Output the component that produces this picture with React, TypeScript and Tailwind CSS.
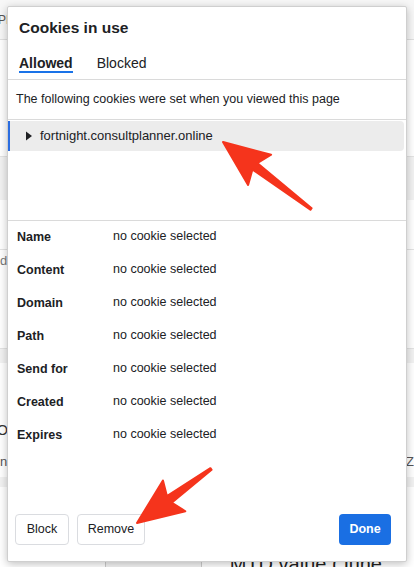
import React from 'react';

const rows = ['Name', 'Content', 'Domain', 'Path', 'Send for', 'Created', 'Expires'];

function Arrow({ x1, y1, x2, y2 }: { x1: number; y1: number; x2: number; y2: number }) {
    // arrow from tail (x1,y1) to tip (x2,y2)
    const dx = x2 - x1;
    const dy = y2 - y1;
    const len = Math.hypot(dx, dy);
    const ux = dx / len;
    const uy = dy / len;
    const px = -uy;
    const py = ux;
    const head = 40;
    const hw = 19;
    const sw = 4;
    const bx = x2 - ux * head;
    const by = y2 - uy * head;
    const pts = [
        [x1 + px * 1, y1 + py * 1],
        [bx + px * sw, by + py * sw],
        [bx - ux * 6 + px * hw, by - uy * 6 + py * hw],
        [x2, y2],
        [bx - ux * 6 - px * hw, by - uy * 6 - py * hw],
        [bx - px * sw, by - py * sw],
        [x1 - px * 1, y1 - py * 1],
    ]
        .map((p) => p.join(','))
        .join(' ');
    return <polygon points={pts} fill="#f5341c" stroke="#f5341c" strokeWidth="2" strokeLinejoin="round" />;
}

export default function App() {
    return (
        <div className="relative w-[414px] h-[567px] overflow-hidden bg-white font-['Liberation_Sans',Arial,sans-serif] text-[#202124]">
            {/* page behind the dialog */}
            <div className="flex flex-col">
                <div className="h-[40px] border-b border-[#e0e0e0] bg-[#f7f7f7] text-[12px] leading-[40px] text-[#555]">
                    <span className="-ml-[2px]">PP</span>
                </div>
                <div className="h-[117px] border-b border-[#e3e3e3]" />
                <div className="h-[43px] bg-[#f2f2f2]" />
                <div className="h-[50px] border-b border-[#e3e3e3]" />
                <div className="h-[22px] text-[13px] leading-[22px] text-[#777]">da</div>
                <div className="h-[77px] border-b border-[#e3e3e3]" />
                <div className="h-[14px] bg-[#f2f2f2]" />
                <div className="h-[50px]" />
                <div className="flex h-[34px] justify-between text-[14px] leading-[34px] text-[#333]">
                    <span className="-ml-[3px]">O</span>
                </div>
                <div className="flex h-[30px] justify-between text-[13px] leading-[30px] text-[#555]">
                    <span>n</span>
                    <span>Z</span>
                </div>
                <div className="h-[10px] bg-[#f2f2f2]" />
                <div className="h-[70px]" />
                <div className="flex h-[12px] items-start">
                    <div className="ml-[105px] h-[12px] w-[106px] border border-[#ccc] bg-[#f4f4f4]" />
                    <span className="ml-[28px] -mt-[3px] text-[20px] leading-[20px] text-[#222]">MTD value (June 2023</span>
                </div>
            </div>

            {/* dialog */}
            <div className="absolute left-[7px] top-[6px] flex h-[556px] w-[400px] flex-col rounded-[2px] border border-[#cfcfcf] bg-white shadow-[0_2px_8px_rgba(0,0,0,0.25)]">
                <div className="px-[11px] pt-[10px] text-[15.5px] font-bold leading-[22px] text-[#202124]">Cookies in use</div>
                <div className="mt-[17px] flex gap-[24px] px-[11px] text-[14px] leading-[14px]">
                    <div className="flex flex-col">
                        <span className="font-bold">Allowed</span>
                        <span className="mt-[1px] h-[2px] bg-[#1a73e8]" />
                    </div>
                    <span>Blocked</span>
                </div>
                <div className="mt-[6px] border-b border-[#dadada]" />
                <div className="px-[8px] py-[11px] text-[12.5px] leading-[17px]">The following cookies were set when you viewed this page</div>
                <div className="border-b border-[#dadada]" />
                <div className="h-[100px]">
                    <div className="mt-[1px] mr-[2px] flex h-[30px] items-center rounded-r-[4px] border-l-[2px] border-[#2b6de0] bg-[#ececec] pl-[15px] text-[13px]">
                        <svg width="8" height="10" viewBox="0 0 8 10" className="mr-[7px]">
                            <path d="M1 0.5 L7 5 L1 9.5 Z" fill="#202124" />
                        </svg>
                        fortnight.consultplanner.online
                    </div>
                </div>
                <div className="border-b border-[#dadada]" />
                <div className="flex flex-col">
                    {rows.map((r) => (
                        <div key={r} className="flex h-[33px] items-center text-[12.5px]">
                            <span className="w-[105px] pl-[9px] font-bold">{r}</span>
                            <span className="-mt-[2px]">no cookie selected</span>
                        </div>
                    ))}
                </div>
                <div className="mt-auto flex items-center gap-[8px] px-[7px] pb-[16px] text-[12.5px]">
                    <button className="h-[31px] w-[54px] rounded-[4px] border border-[#dadce0] text-[#202124]">Block</button>
                    <button className="h-[31px] w-[68px] rounded-[4px] border border-[#dadce0] text-[#202124]">Remove</button>
                    <button className="ml-auto mr-[8px] h-[31px] w-[52px] rounded-[4px] bg-[#1a6fe3] font-bold text-white">Done</button>
                </div>
            </div>

            {/* annotation arrows */}
            <svg className="pointer-events-none absolute left-0 top-0" width="414" height="567">
                <Arrow x1={311} y1={209} x2={223} y2={142} />
                <Arrow x1={211} y1={469} x2={137} y2={523} />
            </svg>
        </div>
    );
}
